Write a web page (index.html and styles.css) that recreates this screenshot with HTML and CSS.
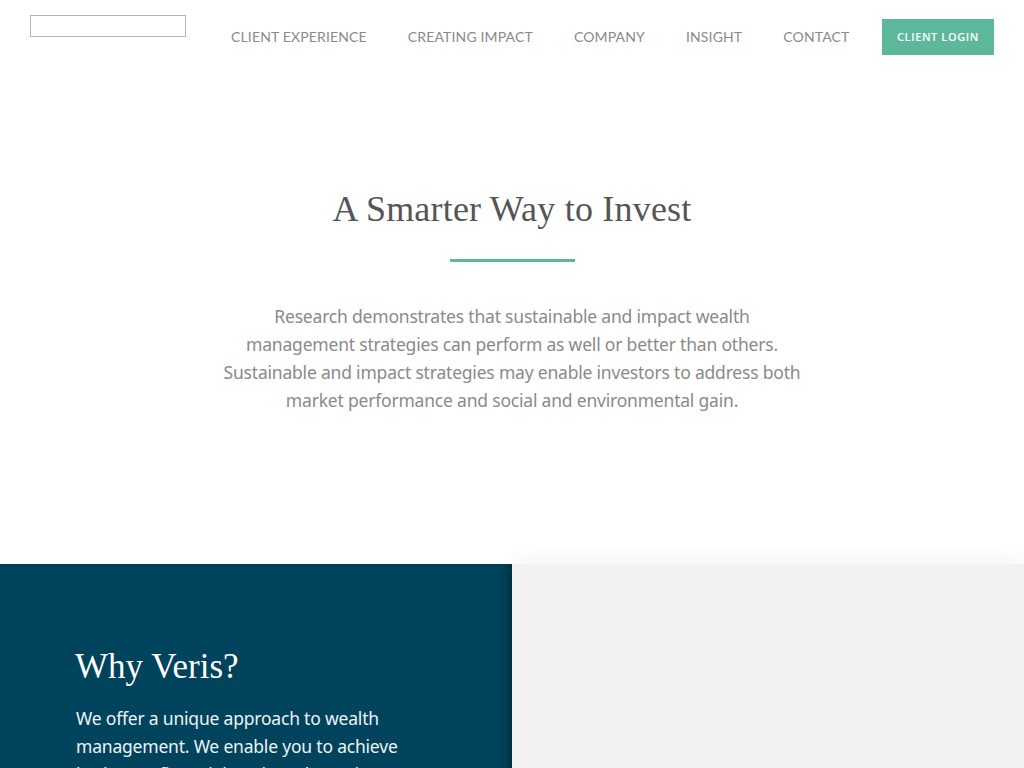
FILE: index.html
```html
<!DOCTYPE html>
<html lang="en">
<head>
<meta charset="UTF-8">
<meta name="viewport" content="width=device-width, initial-scale=1.0">
<title>Veris - A Smarter Way to Invest</title>
<link rel="stylesheet" href="styles.css">
</head>
<body class="page">

<header class="site-header">
    <a class="logo" href="#"></a>
    <nav class="main-nav">
        <a href="#">CLIENT EXPERIENCE</a>
        <a href="#">CREATING IMPACT</a>
        <a href="#">COMPANY</a>
        <a href="#">INSIGHT</a>
        <a href="#">CONTACT</a>
    </nav>
    <a class="login-button" href="#">CLIENT LOGIN</a>
</header>

<section class="hero">
    <h1 class="hero-title">A Smarter Way to Invest</h1>
    <div class="hero-rule"></div>
    <p class="hero-text">Research demonstrates that sustainable and impact wealth<br> management strategies can perform as well or better than others.<br> Sustainable and impact strategies may enable investors to address both<br> market performance and social and environmental gain.</p>
</section>

<section class="split">
    <div class="why">
        <h2 class="why-title">Why Veris?</h2>
        <p class="why-text">We offer a unique approach to wealth management. We enable you to achieve both your financial goals and your impact goals.</p>
    </div>
    <div class="split-side"></div>
</section>

</body>
</html>
```

FILE: styles.css
```css
.page {
    margin: 0;
    font-family: "Noto Sans", sans-serif;
    background-color: #fff;
}

/* header */
.site-header {
    display: flex;
    align-items: flex-start;
    padding: 15px 30px 0 30px;
    height: 60px;
}

.logo {
    display: block;
    width: 154px;
    height: 20px;
    border: 1px solid #b4b4b4;
}

.main-nav {
    display: flex;
    gap: 41px;
    margin-left: 45px;
    padding-top: 13px;
}

.main-nav a {
    font-family: Lato, sans-serif;
    font-size: 14px;
    color: #8a8a8a;
    text-decoration: none;
    letter-spacing: 0.15px;
}

.login-button {
    margin-left: auto;
    margin-top: 4px;
    width: 112px;
    height: 36px;
    line-height: 36px;
    text-align: center;
    background-color: #5db89b;
    color: #fff;
    font-family: "Open Sans", sans-serif;
    font-size: 11px;
    font-weight: 600;
    letter-spacing: 0.6px;
    text-decoration: none;
}

/* hero */
.hero {
    height: 489px;
    display: flex;
    flex-direction: column;
    align-items: center;
    padding-top: 113px;
    box-sizing: border-box;
}

.hero-title {
    margin: 0;
    font-family: "Liberation Serif", serif;
    font-weight: normal;
    font-size: 36px;
    color: #555;
    letter-spacing: 0.2px;
}

.hero-rule {
    width: 125px;
    height: 3px;
    background-color: #5db89b;
    margin-top: 29px;
}

.hero-text {
    margin: 40px 0 0 0;
    width: 640px;
    text-align: center;
    font-size: 17.5px;
    line-height: 28px;
    color: #8a8a8a;
    letter-spacing: -0.2px;
}

/* why veris */
.split {
    display: flex;
}

.why {
    width: 512px;
    height: 300px;
    box-sizing: border-box;
    padding: 83px 80px 0 75px;
    background-color: #00435c;
    box-shadow: inset -7px 0 8px -4px rgba(0, 0, 0, 0.35);
}

.why-title {
    margin: 0;
    font-family: "Liberation Serif", serif;
    font-weight: normal;
    font-size: 35px;
    color: #fff;
}

.why-text {
    margin: 17px 0 0 1px;
    font-size: 17.5px;
    line-height: 28px;
    color: #eef3f5;
    letter-spacing: -0.2px;
}

.split-side {
    flex: 1;
    background-color: #f3f2f0;
    box-shadow: 0 -8px 16px rgba(0, 0, 0, 0.04);
}
```
